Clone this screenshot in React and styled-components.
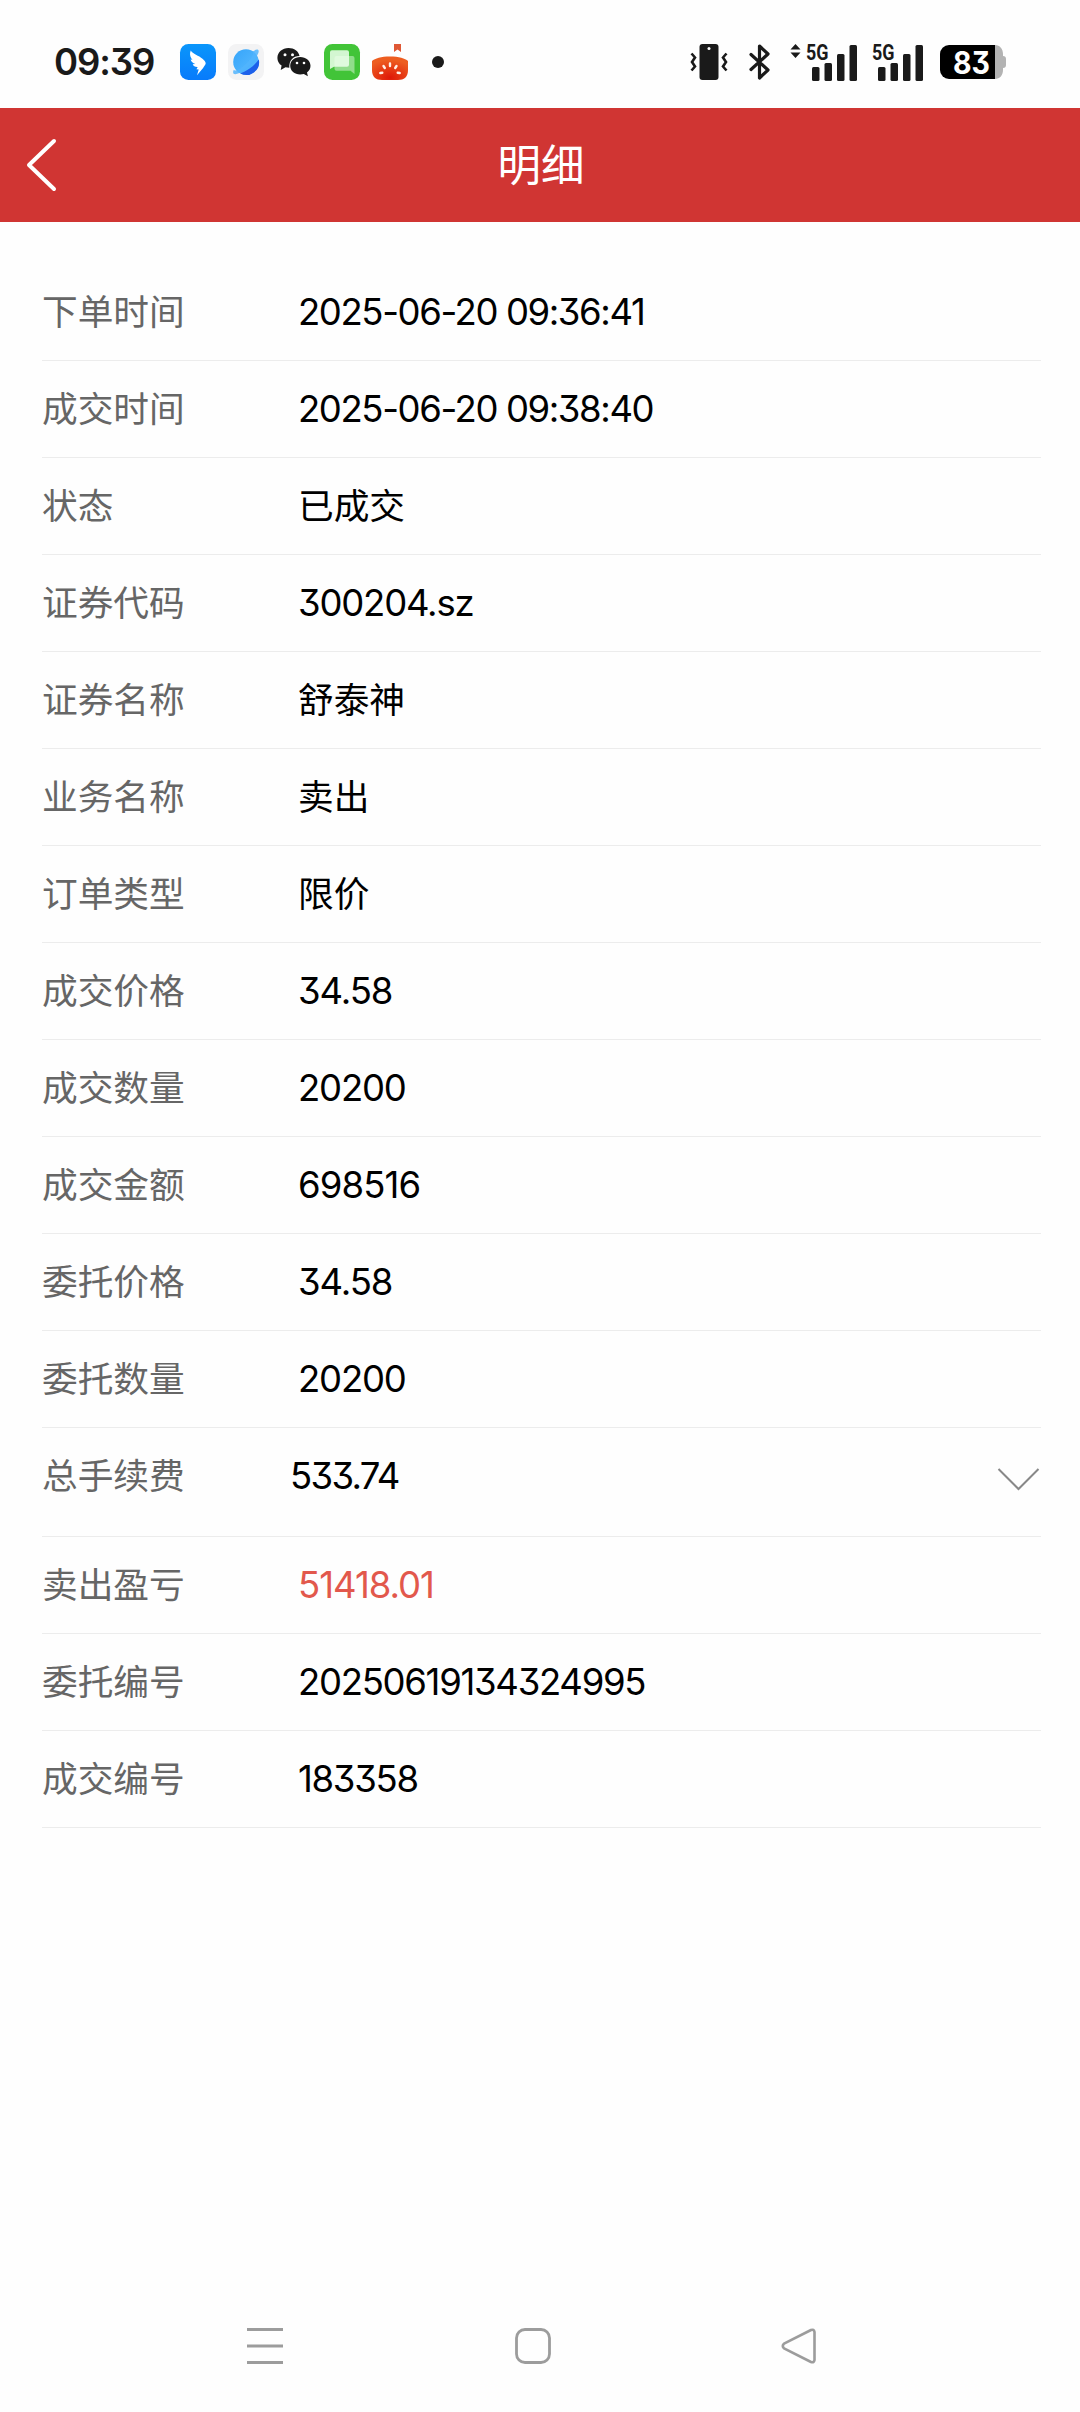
import React from 'react'
import styled, { createGlobalStyle } from 'styled-components'

const GlobalStyle = createGlobalStyle`
    body {
        margin: 0;
        background: #fefefe;
    }
`
const Screen = styled.div`
    width: 1080px;
    height: 2412px;
    display: flex;
    flex-direction: column;
    background: #fefefe;
    overflow: hidden;
    font-family: 'Inter', 'Noto Sans CJK SC', sans-serif;
    font-feature-settings: 'cv09' 1;
    svg {
        display: block;
        flex: none;
        overflow: visible;
    }
`
const StatusBar = styled.div`
    height: 108px;
    box-sizing: border-box;
    padding: 41px 74px 25px 54px;
    display: flex;
    justify-content: space-between;
    align-items: center;
    color: #1a1a1a;
`
const StatusGroup = styled.div`
    display: flex;
    align-items: center;
    height: 42px;
`
const Clock = styled.div`
    width: 126px;
    font-size: 36.5px;
    line-height: 42px;
    font-weight: 600;
    letter-spacing: -1.1px;
    white-space: nowrap;
`
const AppIcons = styled.div`
    display: flex;
    align-items: center;
    gap: 12px;
`
const Dot = styled.div`
    width: 12px;
    height: 12px;
    margin-left: 24px;
    border-radius: 50%;
    background: #1a1a1a;
`
const Connections = styled.div`
    display: flex;
    align-items: center;
    gap: 20px;
`
const Signals = styled.div`
    display: flex;
    gap: 15px;
    margin: 0 17px 0 18px;
`
const Header = styled.div`
    height: 114px;
    display: grid;
    grid-template-columns: 82px 1fr 80px;
    align-items: center;
    background: #d03533;
    color: white;
`
const BackButton = styled.div`
    padding-left: 26px;
`
const Title = styled.div`
    font-size: 43.5px;
    line-height: 60px;
    text-align: center;
`
const List = styled.div`
    flex: 1;
    padding: 42px 39px 0 42px;
`
const Row = styled.div`
    height: ${props => (props.$tall ? 109 : 97)}px;
    box-sizing: border-box;
    border-bottom: 1px solid #ececec;
    display: flex;
    align-items: flex-start;
    font-size: 35.7px;
    line-height: 96px;
`
const Label = styled.div`
    width: ${props => (props.$narrow ? 248 : 256)}px;
    flex: none;
    color: #666666;
`
const Value = styled.div`
    flex: 1;
    color: ${props => props.$color || '#000000'};
    font-size: ${props => (props.$spacing ? 36.5 : 35.7)}px;
    letter-spacing: ${props => props.$spacing || 0}px;
    white-space: nowrap;
`
const Arrow = styled.div`
    padding: 39px 1px 0 0;
`
const NavBar = styled.div`
    height: 132px;
    box-sizing: border-box;
    padding: 0 263px 0 246px;
    display: flex;
    align-items: center;
    justify-content: space-between;
`

const rows = [
    { label: '下单时间', value: '2025-06-20 09:36:41', spacing: -1.4 },
    { label: '成交时间', value: '2025-06-20 09:38:40', spacing: -1.4 },
    { label: '状态', value: '已成交' },
    { label: '证券代码', value: '300204.sz', spacing: -1.2 },
    { label: '证券名称', value: '舒泰神' },
    { label: '业务名称', value: '卖出' },
    { label: '订单类型', value: '限价' },
    { label: '成交价格', value: '34.58', spacing: -1.1 },
    { label: '成交数量', value: '20200', spacing: -1.2 },
    { label: '成交金额', value: '698516', spacing: -0.9 },
    { label: '委托价格', value: '34.58', spacing: -1.1 },
    { label: '委托数量', value: '20200', spacing: -1.2 },
    { label: '总手续费', value: '533.74', spacing: -1.7, expandable: true },
    { label: '卖出盈亏', value: '51418.01', spacing: -1, color: '#e2584c' },
    { label: '委托编号', value: '20250619134324995', spacing: -1.3 },
    { label: '成交编号', value: '183358', spacing: -1.3 },
]

const WingIcon = () => (
    <svg width="36" height="36" viewBox="0 0 36 36">
        <defs>
            <linearGradient id="wing" x1="0" y1="0" x2="0" y2="1">
                <stop offset="0" stopColor="#0a96fb" />
                <stop offset="1" stopColor="#087bfb" />
            </linearGradient>
        </defs>
        <rect width="36" height="36" rx="8.5" fill="url(#wing)" />
        <path d="M10.800 6.500C12.500 10 19 11.500 22.500 14.800c1.800 1.700 3.200 3 3.200 4.500 0 1.200-1.300 2.800-2.600 4.600L17 31.200l1.700-5.700-2.300-.3 1.300-2.200c-2.500.2-4.300-1-5-2.800l2.600-.3c-2.300-.6-4.200-2.200-4.700-4.300l2 .2C10.200 13.500 9.300 10 10.800 6.500Z" fill="#fff" />
    </svg>
)

const PlanetIcon = () => (
    <svg width="36" height="36" viewBox="0 0 36 36">
        <defs>
            <linearGradient id="planet" x1="0" y1="0" x2="1" y2="1">
                <stop offset="0" stopColor="#36a5fa" />
                <stop offset="1" stopColor="#5cbcff" />
            </linearGradient>
        </defs>
        <rect width="36" height="36" rx="8.5" fill="#f3f3f4" />
        <circle cx="18" cy="18" r="12.800" fill="url(#planet)" />
        <path d="M30.800 15.500A12.800 12.800 0 0 1 12.200 29.400C20 26.500 26.500 21.500 30.800 15.500Z" fill="#1d60ea" />
        <path d="M25 7.500c2.800-2.500 5.600-2.600 5.700-.4.100 5-13.400 20.300-21.500 22.700-4 1.200-4.900-.9-3.400-4.100 1 1.800 4.600.2 9.200-3.300C20.600 18 26.300 11.500 25 7.500Z" fill="#51b4fd" opacity=".85" />
    </svg>
)

const ChatIcon = () => (
    <svg width="36" height="36" viewBox="0 0 36 36">
        <path d="M12.500 4C6.300 4 1.400 8.300 1.400 13.900c0 3.200 1.600 5.900 4.200 7.700L4.700 26l4.800-2.800c1.200.3 2.400.5 3.800.5C13 16.500 17 12 23.500 12 22.600 7.200 18.200 4 12.500 4Z" fill="#1a1a1a" />
        <path d="M24.200 13.100c-5.700 0-10 3.800-10 8.700s4.300 8.700 10 8.700c1.300 0 2.500-.2 3.600-.5l4.100 2.200-.9-3.700c2.300-1.700 3.500-4 3.500-6.700 0-4.900-4.600-8.700-10.300-8.700Z" fill="#1a1a1a" />
        <circle cx="9" cy="10.800" r="1.500" fill="#fff" />
        <circle cx="16.500" cy="10.800" r="1.500" fill="#fff" />
        <circle cx="21" cy="19" r="1.300" fill="#fff" />
        <circle cx="28" cy="19" r="1.300" fill="#fff" />
    </svg>
)

const MessageIcon = () => (
    <svg width="36" height="36" viewBox="0 0 36 36">
        <rect width="36" height="36" rx="8.5" fill="#42c438" />
        <path d="M12.500 12h16a2 2 0 0 1 2 2v16l-4-3.300h-14a2 2 0 0 1-2-2V14a2 2 0 0 1 2-2Z" fill="#fff" opacity=".42" />
        <path d="M8 6.200h15a2 2 0 0 1 2 2v12.600a2 2 0 0 1-2 2H10L6 25V8.200a2 2 0 0 1 2-2Z" fill="#f0ffee" opacity=".84" />
    </svg>
)

const TomatoIcon = () => (
    <svg width="36" height="36" viewBox="0 0 36 36">
        <defs>
            <radialGradient id="tomato" cx=".5" cy=".9" r=".75">
                <stop offset="0" stopColor="#df1808" />
                <stop offset="1" stopColor="#ed5d20" />
            </radialGradient>
        </defs>
        <path d="M22 0h7v8l-3.500-2.500L22 8Z" fill="#df5835" />
        <path d="M0 17c3-2.500 9-4.500 18-4.500S33 14.500 36 17v9c0 7-4 10-10 10H10C4 36 0 33 0 26Z" fill="url(#tomato)" />
        <g stroke="#fff0e6" strokeWidth="2.400" strokeLinecap="round">
            <path d="M18 19.500v2.500M11.500 22l1.300 2M24.500 22l-1.300 2M8.300 29l2-.3M27.700 29l-2-.3" />
        </g>
    </svg>
)

const VibrateIcon = () => (
    <svg width="38" height="36" viewBox="0 0 38 36">
        <rect x="9.500" width="19" height="36" rx="3" fill="#1a1a1a" />
        <circle cx="19" cy="4.500" r="1.500" fill="#fff" />
        <path d="m1.500 9.500 3.500 4-3 4.500 3 4.500-3.500 4M36.500 9.500l-3.500 4 3 4.500-3 4.500 3.500 4" fill="none" stroke="#1a1a1a" strokeWidth="2.600" />
    </svg>
)

const BluetoothIcon = () => (
    <svg width="24" height="36" viewBox="0 0 24 36">
        <path d="m3 10.500 17 15.500-8.500 8V2l8.500 8L3 25.500" fill="none" stroke="#1a1a1a" strokeWidth="3.200" strokeLinejoin="round" strokeLinecap="round" />
    </svg>
)

const SignalText = styled.text`
    font-family: 'Roboto', sans-serif;
    font-size: 21.5px;
    font-weight: 700;
`
const SignalIcon = ({ arrows }) => (
    <svg width={arrows ? 67 : 51} height="38" viewBox={arrows ? '-16 0 67 38' : '0 0 51 38'} fill="#1a1a1a">
        {arrows && <path d="M-15.500 6.500l5-5.500 5 5.500ZM-15.500 9.500h10l-5 5.500Z" />}
        <SignalText x="0" y="16.800" textLength="22.500" lengthAdjust="spacingAndGlyphs">5G</SignalText>
        <rect x="6" y="24" width="7.500" height="14" rx="1.500" />
        <rect x="18.500" y="20" width="7.500" height="18" rx="1.500" />
        <rect x="31" y="11" width="7.500" height="27" rx="1.500" />
        <rect x="43.500" y="2" width="7.500" height="36" rx="1.500" />
    </svg>
)

const BatteryText = styled.text`
    font-family: 'Inter', sans-serif;
    font-size: 31px;
    font-weight: 700;
`
const BatteryIcon = () => (
    <svg width="66" height="34" viewBox="0 0 66 34">
        <path d="M55 0c5 0 8 4 8 9v2c2 0 3 1 3 3v6c0 2-1 3-3 3v2c0 5-3 9-8 9Z" fill="#b3b3b3" />
        <path d="M9 0h46v34H9a9 9 0 0 1-9-9V9a9 9 0 0 1 9-9Z" fill="#000" />
        <BatteryText x="13" y="28.500" textLength="37" lengthAdjust="spacingAndGlyphs" fill="#fff">83</BatteryText>
    </svg>
)

const App = () => {
    return (
        <Screen>
            <GlobalStyle />
            <StatusBar>
                <StatusGroup>
                    <Clock>09:39</Clock>
                    <AppIcons>
                        <WingIcon />
                        <PlanetIcon />
                        <ChatIcon />
                        <MessageIcon />
                        <TomatoIcon />
                    </AppIcons>
                    <Dot />
                </StatusGroup>
                <StatusGroup>
                    <Connections>
                        <VibrateIcon />
                        <BluetoothIcon />
                    </Connections>
                    <Signals>
                        <SignalIcon arrows />
                        <SignalIcon />
                    </Signals>
                    <BatteryIcon />
                </StatusGroup>
            </StatusBar>
            <Header>
                <BackButton>
                    <svg width="32" height="54" viewBox="0 0 32 54">
                        <path d="M28 3 3 27l25 24" fill="none" stroke="#fff" strokeWidth="4" strokeLinecap="round" strokeLinejoin="round" />
                    </svg>
                </BackButton>
                <Title>明细</Title>
            </Header>
            <List>
                {rows.map((row, i) => {
                    return (
                        <Row key={i} $tall={row.expandable}>
                            <Label $narrow={row.expandable}>{row.label}</Label>
                            <Value $color={row.color} $spacing={row.spacing}>{row.value}</Value>
                            {row.expandable &&
                                <Arrow>
                                    <svg width="44" height="24" viewBox="0 0 44 24">
                                        <path d="M2.500 2 22.500 22l20-20" fill="none" stroke="#888" strokeWidth="2" />
                                    </svg>
                                </Arrow>
                            }
                        </Row>
                    )
                })}
            </List>
            <NavBar>
                <svg width="38" height="38" viewBox="0 0 38 38">
                    <path d="M1 2.500h36M1 19h36M1 35.500h36" stroke="#9c9c9c" strokeWidth="3" />
                </svg>
                <svg width="38" height="38" viewBox="0 0 38 38">
                    <rect x="2.500" y="2.500" width="33" height="33" rx="8.500" fill="none" stroke="#9c9c9c" strokeWidth="2.800" />
                </svg>
                <svg width="36" height="38" viewBox="0 0 36 38">
                    <path d="M3 16.700 30 3q3-1 3.500 2v28q-.5 3-3.500 2L3 21.300q-2.500-2.300 0-4.600Z" fill="none" stroke="#9c9c9c" strokeWidth="2.600" strokeLinejoin="round" />
                </svg>
            </NavBar>
        </Screen>
    )
}

export default App
